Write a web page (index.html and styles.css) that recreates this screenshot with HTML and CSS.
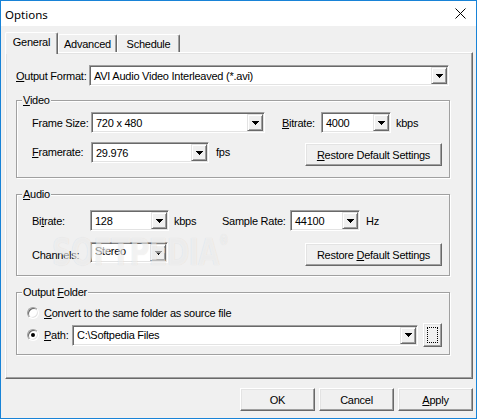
FILE: index.html
```html
<!DOCTYPE html>
<html>
<head>
<meta charset="utf-8">
<title>Options</title>
<link rel="stylesheet" href="styles.css">
</head>
<body>
<div class="window">
  <div class="titlebar">
    <span class="title">Options</span>
    <svg class="close" width="11" height="11" viewBox="0 0 11 11"><path d="M0.5 0.5 L10.5 10.5 M10.5 0.5 L0.5 10.5" stroke="#000" stroke-width="1" fill="none"/></svg>
  </div>
  <div class="client">
    <div class="tabs">
      <div class="tab selected w-general">General</div>
      <div class="tab w-advanced">Advanced</div>
      <div class="tab w-schedule">Schedule</div>
    </div>
    <div class="panel">
      <div class="row">
        <span class="lbl w73"><u>O</u>utput Format:</span>
        <div class="combo w360"><span class="val">AVI Audio Video Interleaved (*.avi)</span><span class="drop"><svg width="7" height="4" viewBox="0 0 7 4"><path d="M0 0h7v1h-7z M1 1h5v1h-5z M2 2h3v1h-3z M3 3h1v1h-1z" fill="#000"/></svg></span></div>
      </div>

      <div class="group group-video">
        <div class="group-title"><u>V</u>ideo</div>
        <div class="group-body">
          <div class="row">
            <span class="lbl w59">Frame Size:</span>
            <div class="combo w174"><span class="val">720 x 480</span><span class="drop"><svg width="7" height="4" viewBox="0 0 7 4"><path d="M0 0h7v1h-7z M1 1h5v1h-5z M2 2h3v1h-3z M3 3h1v1h-1z" fill="#000"/></svg></span></div>
            <span class="lbl w39 ml17"><u>B</u>itrate:</span>
            <div class="combo w70"><span class="val">4000</span><span class="drop"><svg width="7" height="4" viewBox="0 0 7 4"><path d="M0 0h7v1h-7z M1 1h5v1h-5z M2 2h3v1h-3z M3 3h1v1h-1z" fill="#000"/></svg></span></div>
            <span class="unit ml5">kbps</span>
          </div>
          <div class="row row2">
            <span class="lbl w59"><u>F</u>ramerate:</span>
            <div class="combo w118"><span class="val">29.976</span><span class="drop"><svg width="7" height="4" viewBox="0 0 7 4"><path d="M0 0h7v1h-7z M1 1h5v1h-5z M2 2h3v1h-3z M3 3h1v1h-1z" fill="#000"/></svg></span></div>
            <span class="unit ml7">fps</span>
            <button class="btn restore"><span><u>R</u>estore Default Settings</span></button>
          </div>
        </div>
      </div>

      <div class="group group-audio">
        <div class="group-title"><u>A</u>udio</div>
        <div class="group-body">
          <div class="row">
            <span class="lbl w58">Bi<u>t</u>rate:</span>
            <div class="combo w79"><span class="val">128</span><span class="drop"><svg width="7" height="4" viewBox="0 0 7 4"><path d="M0 0h7v1h-7z M1 1h5v1h-5z M2 2h3v1h-3z M3 3h1v1h-1z" fill="#000"/></svg></span></div>
            <span class="unit ml5 w48">kbps</span>
            <span class="lbl w68">Sample Rate:</span>
            <div class="combo w70"><span class="val">44100</span><span class="drop"><svg width="7" height="4" viewBox="0 0 7 4"><path d="M0 0h7v1h-7z M1 1h5v1h-5z M2 2h3v1h-3z M3 3h1v1h-1z" fill="#000"/></svg></span></div>
            <span class="unit ml6">Hz</span>
          </div>
          <div class="row row2">
            <span class="lbl w58 lowlbl">Channels:</span>
            <div class="combo w78"><span class="val highval">Stereo</span><span class="drop"><svg width="7" height="4" viewBox="0 0 7 4"><path d="M0 0h7v1h-7z M1 1h5v1h-5z M2 2h3v1h-3z M3 3h1v1h-1z" fill="#000"/></svg></span></div>
            <button class="btn restore"><span>Restore <u>D</u>efault Settings</span></button>
          </div>
        </div>
      </div>

      <div class="group group-folder">
        <div class="group-title">Output <u>F</u>older</div>
        <div class="group-body">
          <div class="row radio-row">
            <span class="radio"></span>
            <span class="lbl ml5"><u>C</u>onvert to the same folder as source file</span>
          </div>
          <div class="row path-row">
            <span class="radio checked"></span>
            <span class="lbl ml5 w28"><u>P</u>ath:</span>
            <div class="combo w346"><span class="val">C:\Softpedia Files</span><span class="drop"><svg width="7" height="4" viewBox="0 0 7 4"><path d="M0 0h7v1h-7z M1 1h5v1h-5z M2 2h3v1h-3z M3 3h1v1h-1z" fill="#000"/></svg></span></div>
            <button class="btn browse"><span class="focus"></span></button>
          </div>
        </div>
      </div>

      <div class="watermark">SOFTPEDIA<span class="reg">®</span></div>
    </div>
    <div class="footer">
      <button class="btn dlg">OK</button>
      <button class="btn dlg">Cancel</button>
      <button class="btn dlg"><span><u>A</u>pply</span></button>
    </div>
  </div>
</div>
</body>
</html>
```

FILE: styles.css
```css
* { box-sizing: border-box; }
html, body { margin: 0; padding: 0; }
body {
  width: 477px;
  height: 419px;
  overflow: hidden;
  background: #f0f0f0;
  font-family: "Liberation Sans", Arial, sans-serif;
  font-size: 11px;
  letter-spacing: -0.25px;
  color: #000;
}
u { text-decoration: underline; text-underline-offset: 1px; }

.window {
  width: 477px;
  height: 419px;
  border: 1px solid #1883d7;
  display: flex;
  flex-direction: column;
  background: #f0f0f0;
}

.titlebar {
  flex: none;
  height: 25px;
  background: #fff;
  display: flex;
  align-items: center;
  justify-content: space-between;
}
.title {
  font-family: "Noto Sans", "Liberation Sans", sans-serif;
  font-size: 11.5px;
  letter-spacing: 0;
  padding-left: 4px;
  margin-top: 2px;
}
.close { margin-right: 10px; display: block; }

.client {
  flex: 1;
  display: flex;
  flex-direction: column;
  padding: 6px 3px 0 4px;
}

.tabs {
  display: flex;
  align-items: flex-end;
  height: 20px;
}
.tab {
  height: 18px;
  background: #f0f0f0;
  border-top: 1px solid #fff;
  border-left: 1px solid #fff;
  border-right: 1px solid #696969;
  box-shadow: inset -1px 0 #a0a0a0;
  border-radius: 2px 2px 0 0;
  display: flex;
  align-items: center;
  justify-content: center;
}
.tab.selected {
  height: 22px;
  margin-bottom: -2px;
  padding-bottom: 3px;
  position: relative;
  z-index: 2;
}
.w-general { width: 53px; }
.w-advanced { width: 59px; }
.w-schedule { width: 63px; }

.panel {
  position: relative;
  height: 327px;
  border: 1px solid;
  border-color: #fff #696969 #696969 #fff;
  box-shadow: inset -1px -1px #a0a0a0, inset 1px 1px #e3e3e3;
  padding: 12px 0 0 10px;
}

.row { display: flex; align-items: center; }
.lbl, .unit { flex: none; white-space: nowrap; }

.w73 { width: 73px; }
.w59 { width: 59px; }
.w58 { width: 58px; }
.w39 { width: 39px; }
.w68 { width: 68px; }
.w48 { width: 48px; }
.w28 { width: 28px; }
.ml17 { margin-left: 17px; }
.ml5 { margin-left: 5px; }
.ml6 { margin-left: 6px; }
.ml7 { margin-left: 7px; }

.combo {
  flex: none;
  height: 21px;
  display: flex;
  align-items: center;
  background: #fff;
  border: 1px solid;
  border-color: #a0a0a0 #fff #fff #a0a0a0;
  box-shadow: inset 1px 1px #696969, inset -1px -1px #e3e3e3;
  padding: 1px;
}
.combo .val {
  flex: 1;
  padding-left: 3px;
  white-space: nowrap;
  overflow: hidden;
}
.combo .highval { margin-top: -3px; }
.w360 { width: 360px; }
.w174 { width: 174px; }
.w70 { width: 70px; }
.w118 { width: 118px; }
.w79 { width: 79px; }
.w78 { width: 78px; }
.w346 { width: 346px; }

.drop {
  flex: none;
  width: 16px;
  height: 17px;
  background: #f0f0f0;
  border: 1px solid;
  border-color: #e3e3e3 #696969 #696969 #e3e3e3;
  box-shadow: inset 1px 1px #fff, inset -1px -1px #a0a0a0;
  display: flex;
  align-items: center;
  justify-content: center;
}
.drop svg { display: block; }

.btn {
  flex: none;
  height: 23px;
  padding: 0;
  margin: 0;
  background: #f0f0f0;
  border: 1px solid;
  border-color: #fff #696969 #696969 #fff;
  box-shadow: inset -1px -1px #a0a0a0, inset 1px 1px #e3e3e3;
  display: flex;
  align-items: center;
  justify-content: center;
  font: inherit;
  letter-spacing: inherit;
  color: #000;
}
.restore {
  width: 137px;
  margin-left: auto;
  margin-top: 1px;
}

.group {
  width: 434px;
  border: 1px solid #a0a0a0;
  box-shadow: 1px 1px 0 #fff, inset 1px 1px 0 #fff;
}
.group-title {
  width: fit-content;
  height: 13px;
  line-height: 13px;
  margin: -7px 0 -6px 5px;
  padding: 0 1px;
  background: #f0f0f0;
  white-space: nowrap;
}
.group-video { margin-top: 14px; }
.group-video .group-body { padding: 11px 7px 11px 15px; }
.row2 { margin-top: 9px; align-items: flex-start; }
.row2 .lbl, .row2 .unit { line-height: 21px; }

.group-audio { margin-top: 16px; }
.group-audio .group-body { padding: 15px 7px 9px 15px; }
.group-audio .row2 { margin-top: 11px; }
.group-audio .row2 .lowlbl { padding-top: 3px; }

.group-folder { margin-top: 16px; }
.group-folder .group-body { padding: 12px 8px 7px 10px; }
.radio-row { height: 16px; }
.path-row { height: 24px; margin-top: 2px; }

.radio {
  flex: none;
  width: 12px;
  height: 12px;
  border-radius: 50%;
  border: 1px solid;
  border-color: #a0a0a0 #fff #fff #a0a0a0;
  box-shadow: inset 1px 1px #696969, inset -1px -1px #e3e3e3;
  background: #fff;
  display: flex;
  align-items: center;
  justify-content: center;
}
.radio.checked::after {
  content: "";
  width: 4px;
  height: 4px;
  border-radius: 50%;
  background: #000;
}

.browse {
  width: 19px;
  height: 24px;
  margin-left: 5px;
}
.browse .focus {
  width: 11px;
  height: 16px;
  border: 1px dotted #000;
}

.footer {
  display: flex;
  justify-content: flex-end;
  gap: 4px;
  margin-top: 9px;
}
.dlg { width: 75px; }

.watermark {
  position: absolute;
  left: 46px;
  top: 180px;
  font-family: "DejaVu Sans", sans-serif;
  font-weight: bold;
  font-size: 38px;
  line-height: 38px;
  letter-spacing: -1px;
  color: rgba(255, 255, 255, 0.6);
  text-shadow: 0 0 1px rgba(0, 0, 0, 0.12);
  transform: scaleX(0.72);
  transform-origin: left top;
  pointer-events: none;
  white-space: nowrap;
}
.watermark .reg {
  font-size: 14px;
  vertical-align: top;
  line-height: 14px;
  font-weight: normal;
}
```
